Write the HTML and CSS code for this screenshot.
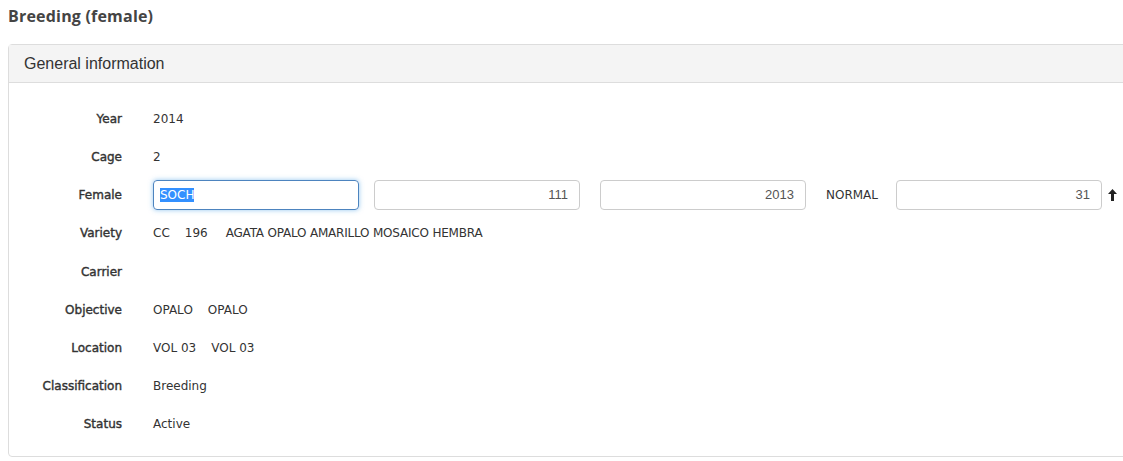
FILE: index.html
```html
<!DOCTYPE html>
<html>
	<head>
		<meta charset="utf-8" />
		<title>Breeding (female)</title>
		<link rel="stylesheet" href="styles.css">
	</head>
	<body>
		<h3 class="page-title">Breeding (female)</h3>
		<div class="panel">
			<div class="panel-heading">General information</div>
			<div class="panel-body">
				<div class="row"><label>Year</label><div class="value">2014</div></div>
				<div class="row"><label>Cage</label><div class="value">2</div></div>
				<div class="row">
					<label>Female</label>
					<div class="value inputs">
						<div class="field focused"><span class="sel">SOCH</span></div>
						<div class="field num first">111</div>
						<div class="field num">2013</div>
						<span class="plain">NORMAL</span>
						<div class="field num">31</div>
						<svg class="arrow" width="9" height="12" viewBox="0 0 9 12"><path d="M4.5 0 L9 5 L6 5 L6 12 L3 12 L3 5 L0 5 Z" fill="#222"/></svg>
					</div>
				</div>
				<div class="row"><label>Variety</label><div class="value"><span class="gap">CC</span><span class="gap wide">196</span><span class="long">AGATA OPALO AMARILLO MOSAICO HEMBRA</span></div></div>
				<div class="row"><label>Carrier</label><div class="value"></div></div>
				<div class="row"><label>Objective</label><div class="value"><span class="gap">OPALO</span>OPALO</div></div>
				<div class="row"><label>Location</label><div class="value"><span class="gap">VOL 03</span>VOL 03</div></div>
				<div class="row"><label>Classification</label><div class="value">Breeding</div></div>
				<div class="row"><label>Status</label><div class="value">Active</div></div>
			</div>
		</div>
	</body>
</html>
```

FILE: styles.css
```css
*{margin: 0;padding: 0;box-sizing: border-box;}
body{margin: 0 8px;font-family: "DejaVu Sans", Verdana, sans-serif;font-size: 12px;color: #333;background: #fff;overflow: hidden;width: 1140px;}
.page-title{font-family: "Open Sans", sans-serif;font-size: 16px;font-weight: 700;color: #444;line-height: 20px;padding-top: 6px;margin-bottom: 18px;letter-spacing: 0.2px;}
.panel{border: 1px solid #ddd;border-radius: 4px;width: 1132px;}
.panel-heading{background: #f4f4f4;border-bottom: 1px solid #ddd;height: 38px;padding-left: 15px;font-family: "Liberation Sans", Arial, sans-serif;font-size: 16px;line-height: 37px;color: #333;}
.panel-body{padding: 21px 0 9px 0;}
.row{display: flex;align-items: center;height: 30px;margin-bottom: 8.125px;}
.row > label{width: 113px;text-align: right;font-weight: 400;color: #333;-webkit-text-stroke: 0.4px #333;}
.row > .value{margin-left: 31px;display: flex;align-items: center;}
.gap{margin-right: 15px;}
.gap.wide{margin-right: 18px;}
.long{letter-spacing: -0.2px;}
.inputs{gap: 20px;}
.field{width: 206px;height: 30px;border: 1px solid #ccc;border-radius: 4px;padding: 0 11px;line-height: 28px;font-family: "Liberation Sans", Arial, sans-serif;font-size: 13px;color: #555;}
.field.num{text-align: right;}
.field.first{margin-left: -5px;}
.field.focused{border-color: #4d84bf;box-shadow: 0 0 5px rgba(102, 175, 233, 0.7);padding-left: 6px;font-family: "DejaVu Sans", Verdana, sans-serif;font-size: 12px;}
.sel{background: #3390ff;color: #fff;}
.plain{color: #333;width: 50px;}
.arrow{margin-left: -14px;}
```
